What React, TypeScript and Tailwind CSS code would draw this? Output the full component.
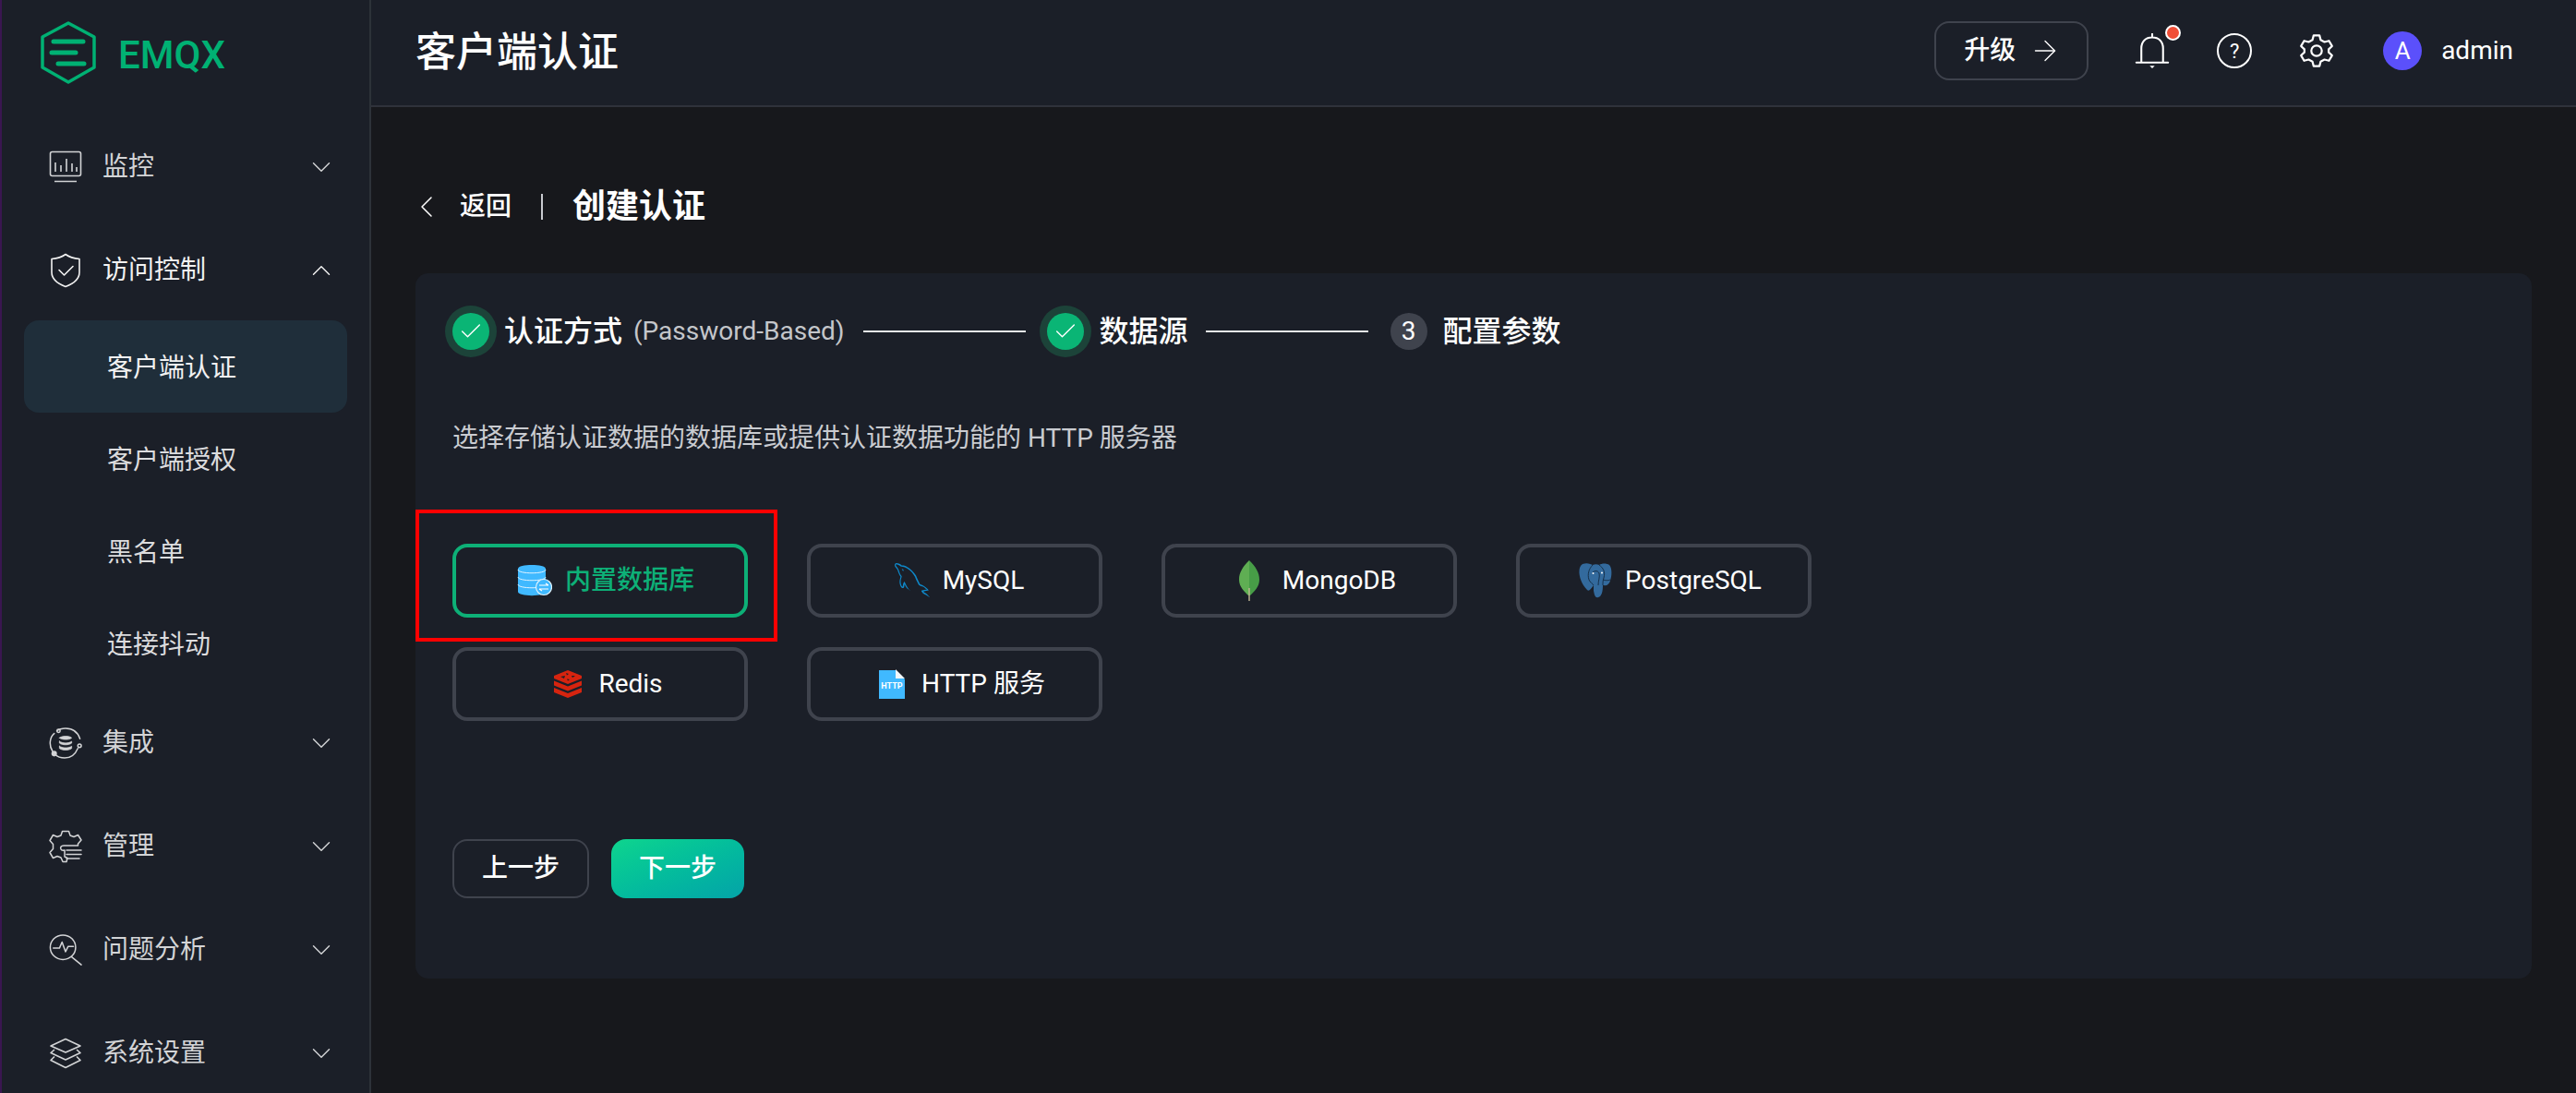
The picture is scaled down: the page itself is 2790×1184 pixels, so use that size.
import { ChevronDown, ChevronLeft, ChevronUp, ArrowRight, Check } from 'lucide-react';
import { GrMysql } from 'react-icons/gr';
import type { ReactNode } from 'react';

const FONT = 'font-[Roboto,"Noto_Sans_CJK_SC",sans-serif]';

function Logo() {
  return (
    <svg width="60" height="68" viewBox="0 0 60 68" fill="none" stroke="#00b173" strokeLinecap="round" strokeLinejoin="round">
      <path d="M30 2 L58 17 V50 L30 66 L2 50 V17 Z" strokeWidth="3.5" />
      <path d="M14 22 H46 M12 34 H38 M19 46 H47" strokeWidth="5" />
    </svg>
  );
}

function MonitorIcon() {
  return (
    <svg width="36" height="36" viewBox="0 0 36 36" fill="none" stroke="currentColor" strokeWidth="1.6">
      <rect x="1.5" y="1.5" width="33" height="26" rx="2" />
      <path d="M6 33.5 H30 M7 13 V23 M13 16 V23 M19 9 V23 M25 14 V23 M30 18 V23" />
    </svg>
  );
}

function ShieldIcon() {
  return (
    <svg width="36" height="38" viewBox="0 0 36 38" fill="none" stroke="currentColor" strokeWidth="1.6" strokeLinejoin="round">
      <path d="M18 1.5 C22 4.5 27 6 33 6.5 V21 C33 28 26 33.5 18 36.5 C10 33.5 3 28 3 21 V6.5 C9 6 14 4.5 18 1.5 Z" />
      <path d="M11 18.5 L16.5 24 L26 14.5" strokeLinecap="round" />
    </svg>
  );
}

function IntegrationIcon() {
  return (
    <svg width="38" height="36" viewBox="0 0 38 36" fill="none" stroke="currentColor" strokeWidth="1.6" strokeLinecap="round">
      <path d="M9 4 C12 1.5 15 1 19 1 C27 1 33 5 35.5 13" />
      <path d="M4 27 C1.5 23 1 20 1.5 16 C2 12 3.5 9 6 7" />
      <path d="M33 24 C30 31 25 35 18 35 C14 35 10 34 7 31" />
      <circle cx="11" cy="4" r="1.8" />
      <circle cx="6" cy="30" r="2.4" fill="currentColor" />
      <circle cx="35" cy="21" r="2" />
      <path d="M12 12 C14 9.5 24 9.5 26 12 C24 14.5 14 14.5 12 12 Z M12 16 V18 C15 20.5 23 20.5 26 18 V16 C23 18.5 15 18.5 12 16 Z M12 21.5 V24 C15 26.5 23 26.5 26 24 V21.5 C23 24 15 24 12 21.5 Z" fill="currentColor" strokeWidth="0.8" />
    </svg>
  );
}

function ManageIcon() {
  return (
    <svg width="36" height="36" viewBox="0 0 36 36" fill="none" stroke="currentColor" strokeWidth="1.5" strokeLinejoin="round" strokeLinecap="round">
      <path d="M14.5 1.5 H21.5 L23 6 L27 7.5 L31.5 5.5 L35 11 L31.5 15 V17 H16 C13 17 12 19 13 21 C14 23 16 22 17 22 V29 L20 30.5 L19 34.5 H15 L13 30 L9 28.5 L4.5 30.5 L1 24.5 L4.5 20.5 V15.5 L1 11.5 L4.5 5.5 L9 7.5 L13 6 Z" />
      <path d="M19 22 H35 M19 26.5 H35 M19 31 H33" />
    </svg>
  );
}

function AnalysisIcon() {
  return (
    <svg width="38" height="36" viewBox="0 0 38 36" fill="none" stroke="currentColor" strokeWidth="1.6" strokeLinecap="round" strokeLinejoin="round">
      <ellipse cx="16" cy="15" rx="14.5" ry="14" />
      <path d="M5 16 H12 L15 9 L19 20 L22 14 H28 M26 26 L37 35" />
    </svg>
  );
}

function LayersIcon() {
  return (
    <svg width="36" height="34" viewBox="0 0 36 34" fill="none" stroke="currentColor" strokeWidth="1.6" strokeLinejoin="round">
      <path d="M18 1.5 L34 9 L18 16 L2 9 Z" />
      <path d="M6 13 L2 16.5 L18 24 L34 16.5 L30 13" />
      <path d="M6 20.5 L2 24.5 L18 32.5 L34 24.5 L30 20.5" />
    </svg>
  );
}

function NavItem({ icon, label, open, active }: { icon: ReactNode; label: string; open?: boolean; active?: boolean }) {
  return (
    <div className={`flex h-[112px] items-center pl-[51px] pr-[35px] pt-[3px] ${active ? 'text-[#f2f2f2]' : 'text-[#d3d4d6]'}`}>
      <div className="flex w-[36px] justify-center">{icon}</div>
      <span className="ml-[22px] flex-1 text-[28px]">{label}</span>
      {open ? <ChevronUp size={34} strokeWidth={1} /> : <ChevronDown size={34} strokeWidth={1} />}
    </div>
  );
}

function SubItem({ label, active }: { label: string; active?: boolean }) {
  return (
    <div className={`ml-[24px] mr-[24px] flex h-[100px] items-center rounded-[16px] pl-[90px] pt-[3px] text-[28px] ${active ? 'bg-[#1f2e3a] text-[#f2f2f2]' : 'text-[#dcdcde]'}`}>
      {label}
    </div>
  );
}

function Sidebar() {
  return (
    <aside className="h-full w-[402px] shrink-0 border-l-2 border-r-2 border-l-[#3a1650] border-r-[#2d3239] bg-[#1b1f28]">
      <div className="flex h-[123px] items-start pl-[42px] pt-[23px]">
        <Logo />
        <span className="ml-[24px] mt-[12px] text-[42px] font-medium leading-[50px] text-[#00b173]">EMQX</span>
      </div>
      <NavItem icon={<MonitorIcon />} label="监控" />
      <NavItem icon={<ShieldIcon />} label="访问控制" open active />
      <SubItem label="客户端认证" active />
      <SubItem label="客户端授权" />
      <SubItem label="黑名单" />
      <SubItem label="连接抖动" />
      <NavItem icon={<IntegrationIcon />} label="集成" />
      <NavItem icon={<ManageIcon />} label="管理" />
      <NavItem icon={<AnalysisIcon />} label="问题分析" />
      <NavItem icon={<LayersIcon />} label="系统设置" />
    </aside>
  );
}

function Header() {
  return (
    <header className="flex h-[116px] items-center border-b-2 border-[#2f323b] bg-[#1b1f28] pl-[48px] pr-[68px] text-white">
      <h1 className="flex-1 text-[44px] font-medium">客户端认证</h1>
      <div className="flex items-center pb-[4px]">
        <button className="flex h-[64px] w-[167px] items-center gap-[14px] rounded-[16px] border-2 border-[#3f434d] pl-[30px] text-[28px] font-medium">
          升级
          <ArrowRight size={36} strokeWidth={0.9} />
        </button>
        <div className="relative ml-[50px] w-[38px]">
          <svg className="block" width="38" height="38" viewBox="0 0 42 42" fill="none" stroke="white" strokeWidth="2.3">
            <path d="M21 1 V5 M8 35 V18 C8 10 13 5 21 5 C29 5 34 10 34 18 V35 M2 35 H40" strokeLinecap="round" />
            <path d="M18 39 H24 L21 42 Z" fill="white" stroke="none" />
          </svg>
          <span className="absolute left-[33px] top-[-9px] h-[17px] w-[17px] rounded-full border-2 border-white bg-[#f04e37]" />
        </div>
        <div className="ml-[51px] flex h-[38px] w-[38px] items-center justify-center rounded-full border-[2.2px] border-white text-[22px]">?</div>
        <svg className="ml-[51px]" width="38" height="38" viewBox="0 0 24 24" fill="none" stroke="white" strokeWidth="1.4" strokeLinecap="round" strokeLinejoin="round">
          <path d="M10 1.5 H14 L14.8 4.6 L17.4 6 L20.5 5.2 L22.6 8.8 L20.3 11 V13 L22.6 15.2 L20.5 18.8 L17.4 18 L14.8 19.4 L14 22.5 H10 L9.2 19.4 L6.6 18 L3.5 18.8 L1.4 15.2 L3.7 13 V11 L1.4 8.8 L3.5 5.2 L6.6 6 L9.2 4.6 Z" />
          <circle cx="12" cy="12" r="3.6" />
        </svg>
        <div className="ml-[53px] flex h-[42px] w-[42px] items-center justify-center rounded-full bg-[#5b50fb] text-[26px]">A</div>
        <span className="ml-[21px] text-[28px]">admin</span>
      </div>
    </header>
  );
}

function DoneDot() {
  return (
    <div className="flex h-[56px] w-[56px] shrink-0 items-center justify-center rounded-full bg-[#1c4339]">
      <div className="flex h-[40px] w-[40px] items-center justify-center rounded-full bg-[#0ab575] text-white">
        <Check size={28} strokeWidth={1.2} />
      </div>
    </div>
  );
}

function Steps() {
  return (
    <div className="-ml-2 flex h-[56px] items-center text-white">
      <DoneDot />
      <span className="ml-[8px] text-[32px] font-medium">认证方式</span>
      <span className="ml-[12px] text-[28px] text-[#c4c6ca]">(Password-Based)</span>
      <div className="ml-[20px] h-[2px] w-[176px] bg-[#e5ecea]" />
      <div className="ml-[15px]"><DoneDot /></div>
      <span className="ml-[9px] text-[32px] font-medium">数据源</span>
      <div className="ml-[19px] h-[2px] w-[176px] bg-[#e5ecea]" />
      <div className="ml-[24px] flex h-[40px] w-[40px] items-center justify-center rounded-full bg-[#3f434d] text-[28px]">3</div>
      <span className="ml-[17px] text-[32px] font-medium">配置参数</span>
    </div>
  );
}

function SourceButton({ icon, label, selected }: { icon: ReactNode; label: string; selected?: boolean }) {
  return (
    <button className={`flex h-[80px] w-[320px] items-center justify-center gap-[14px] rounded-[16px] border-4 pl-[10px] text-[28px] ${selected ? 'border-[#0db077] font-medium text-[#0db077]' : 'border-[#3f434d] text-white'}`}>
      {icon}
      {label}
    </button>
  );
}

function BuiltinDbIcon() {
  return (
    <svg className="ml-[2px]" width="38" height="38" viewBox="0 0 38 38">
      <path d="M1 6 C1 0.5 31 0.5 31 6 V31 C31 36.5 1 36.5 1 31 Z" fill="#40b9ff" />
      <path d="M1 7 C1 12 31 12 31 7 M1 15 C1 20 31 20 31 15 M1 23 C1 28 31 28 31 23" fill="none" stroke="#dff3ff" strokeWidth="1" />
      <circle cx="29" cy="26" r="8.5" fill="#40b9ff" stroke="#dff3ff" strokeWidth="1.2" />
      <path d="M24 24 H34 M31 22 L34 24 M24 28 H34 M24 28 L27 30" fill="none" stroke="white" strokeWidth="1.2" />
    </svg>
  );
}

function LeafIcon() {
  return (
    <svg width="22" height="44" viewBox="0 0 22 44">
      <path d="M11 0 C4 7 0 13 0 21 C0 29 6 34 10 38 L11 38 Z" fill="#5fae53" />
      <path d="M11 0 C18 7 22 13 22 21 C22 29 16 34 12 38 L11 38 Z" fill="#479d47" />
      <path d="M11 30 V44" stroke="#c2b894" strokeWidth="1.4" />
    </svg>
  );
}

function PostgresIcon() {
  return (
    <svg className="ml-[4px]" width="36" height="38" viewBox="0 0 36 38">
      <path d="M4 1 C9 -1 13 1 15 2 C17 1 20 1 22 2 C25 0 30 0 33 2 C36 5 36 13 34 19 C33 23 30 25 27 24 L26 24 C26 30 25 36 21 37 C18 38 17 35 16 30 C16 27 16 25 16 24 C13 28 11 31 9 29 C5 25 1 18 0.5 11 C0.3 6 1 3 4 1 Z" fill="#336a9d" />
      <path d="M15 2 C11 6 9 12 11 18 C12 21 15 22 16 24 M22 2 C26 5 29 9 27 16 C26 19 26 21 26 24 M15 10 C17 8 21 8 22 11 C23 15 21 19 21 24 M26 18 C29 19 32 19 34 18" fill="none" stroke="#16304a" strokeWidth="1" />
      <circle cx="15.5" cy="11" r="1" fill="white" />
      <circle cx="25" cy="10.5" r="1" fill="white" />
    </svg>
  );
}

function RedisIcon() {
  return (
    <svg className="ml-[8px] mr-[4px]" width="30" height="30" viewBox="0 0 30 30">
      <path d="M0 19 L15 25 L30 19 V24 L15 30 L0 24 Z" fill="#d6240f" />
      <path d="M0 11.5 L15 17.5 L30 11.5 V16.5 L15 22.5 L0 16.5 Z" fill="#d6240f" />
      <path d="M15 0 L30 6 V9 L15 15 L0 9 V6 Z" fill="#d6240f" />
      <path d="M13 3 L16 4 L14 5.5 Z M19 6 L23 6 L20 8 Z M7 7 L12 6 L11 9 Z M14 9.5 L17 10 L15 11.5 Z" fill="#1b1f28" />
    </svg>
  );
}

function HttpIcon() {
  return (
    <svg className="ml-[6px] mr-[4px]" width="28" height="32" viewBox="0 0 28 32">
      <path d="M0 1 H18 L28 11 V32 H0 Z" fill="#40b9ff" />
      <path d="M18 0 L28 10 H18 Z" fill="#f2f7fa" />
      <text x="14" y="21" textAnchor="middle" fontSize="9" fontWeight="700" fontFamily="Roboto, sans-serif" fill="white">HTTP</text>
    </svg>
  );
}

function DataSources() {
  return (
    <div className="relative mt-[94px] grid grid-cols-[repeat(4,320px)] gap-x-[64px] gap-y-[32px]">
      <div className="absolute left-[-40px] top-[-37px] h-[143px] w-[392px] border-4 border-[#ff0000]" />
      <SourceButton selected icon={<BuiltinDbIcon />} label="内置数据库" />
      <SourceButton icon={<GrMysql size={38} color="#0f88c9" />} label="MySQL" />
      <SourceButton icon={<span className="ml-[8px] mr-[11px]"><LeafIcon /></span>} label="MongoDB" />
      <SourceButton icon={<PostgresIcon />} label="PostgreSQL" />
      <SourceButton icon={<RedisIcon />} label="Redis" />
      <SourceButton icon={<HttpIcon />} label="HTTP 服务" />
    </div>
  );
}

export default function App() {
  return (
    <div className={`flex h-[1184px] w-[2790px] overflow-hidden bg-[#17181c] ${FONT}`}>
      <Sidebar />
      <main className="flex-1">
        <Header />
        <div className="px-[48px] pt-[86px]">
          <div className="flex h-[44px] items-center text-white">
            <ChevronLeft className="-ml-[8px]" size={40} strokeWidth={0.9} />
            <span className="ml-[16px] text-[28px] font-medium">返回</span>
            <div className="ml-[32px] h-[28px] w-[2px] bg-[#c9cbd0]" />
            <span className="ml-[32px] text-[36px] font-bold">创建认证</span>
          </div>
          <section className="mt-[50px] h-[764px] rounded-[14px] bg-[#1b1f28] px-10 pt-[35px]">
            <Steps />
            <p className="mt-[68px] text-[28px] leading-[40px] text-[#c9cbd0]">选择存储认证数据的数据库或提供认证数据功能的 HTTP 服务器</p>
            <DataSources />
            <div className="mt-[128px] flex gap-[24px]">
              <button className="h-[64px] w-[148px] rounded-[16px] border-2 border-[#3f434d] text-[28px] font-medium text-white">上一步</button>
              <button className="h-[64px] w-[144px] rounded-[16px] bg-gradient-to-br from-[#0fd58d] to-[#05a3a8] text-[28px] font-medium text-white">下一步</button>
            </div>
          </section>
        </div>
      </main>
    </div>
  );
}
